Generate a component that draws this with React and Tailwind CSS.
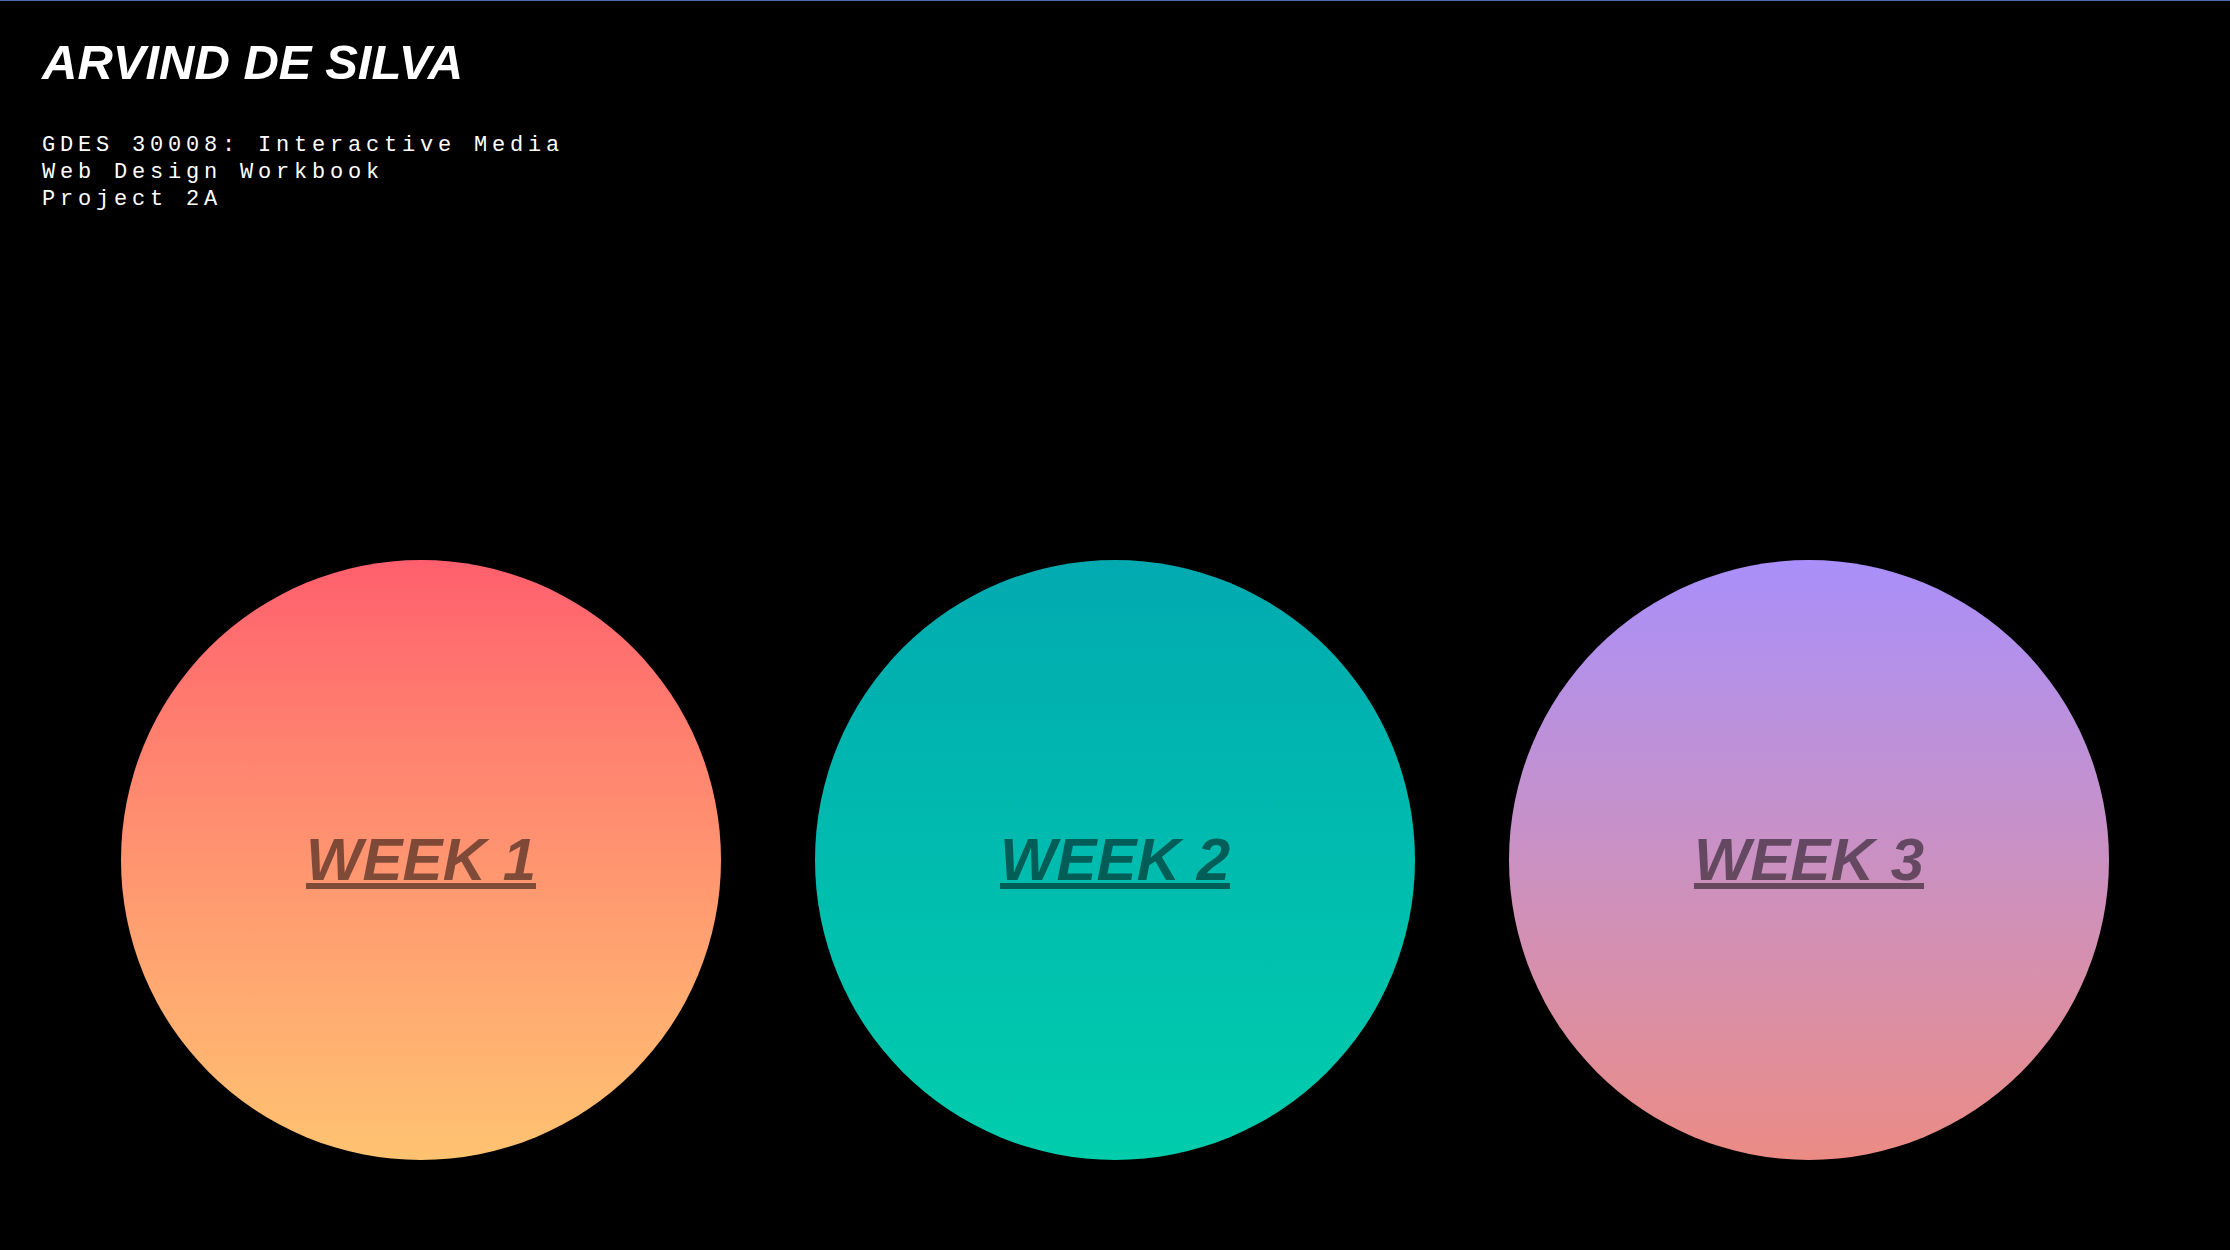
import React from 'react';

const weeks = [
  { label: 'WEEK 1', gradient: 'bg-gradient-to-b from-[#ff5f6d] to-[#ffc371]' },
  { label: 'WEEK 2', gradient: 'bg-gradient-to-b from-[#02aab0] to-[#00cdac]' },
  { label: 'WEEK 3', gradient: 'bg-gradient-to-b from-[#a98ffa] to-[#eb8b84]' },
];

const App = () => {
  return (
    <div className="min-h-screen bg-black">
      <div className="h-px bg-[#4b6ea9]" />

      <header className="pl-[42px] pt-[25px]">
        <h1 className="text-[49px] font-bold italic text-white leading-normal font-['Liberation_Sans',Arial,sans-serif]">
          ARVIND DE SILVA
        </h1>
        <div className="mt-[32px] text-[22px] leading-[27px] tracking-[4.8px] text-white font-['Liberation_Mono','Courier_New',monospace]">
          <p>GDES 30008: Interactive Media</p>
          <p>Web Design Workbook</p>
          <p>Project 2A</p>
        </div>
      </header>

      <main className="mt-[347px] flex justify-center gap-[94px]">
        {weeks.map((w) => (
          <a
            key={w.label}
            href="#"
            className={`w-[600px] h-[600px] rounded-full flex items-center justify-center ${w.gradient}`}
          >
            <span className="text-[60px] font-bold italic underline text-black/50 font-['Liberation_Sans',Arial,sans-serif]">
              {w.label}
            </span>
          </a>
        ))}
      </main>
    </div>
  );
};

export default App;
